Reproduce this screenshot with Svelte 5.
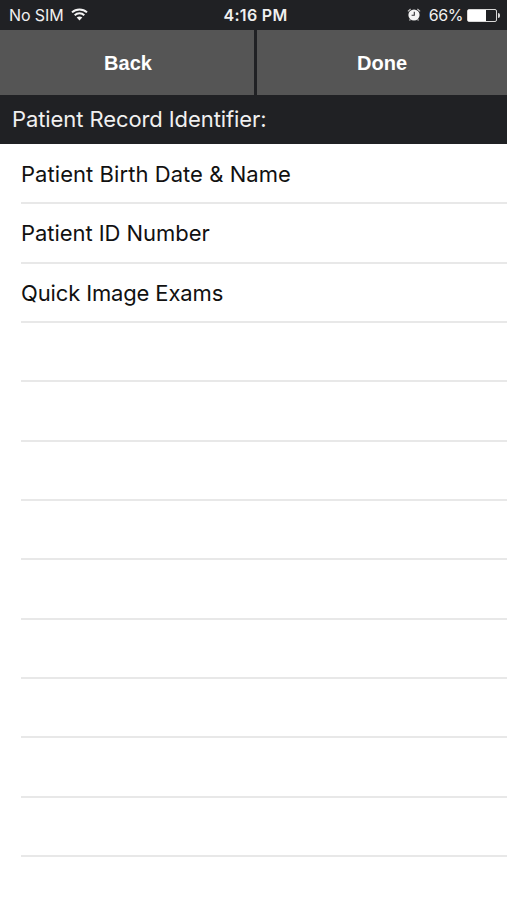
<script>
	const rows = [
		{ text: 'Patient Birth Date & Name', tone: 'wide' },
		{ text: 'Patient ID Number', tone: '' },
		{ text: 'Quick Image Exams', tone: 'tight' },
		...Array(10).fill({ text: '', tone: '' })
	];

	let selected = $state('');
	let battery = $state(66);
</script>

<div class="screen">
	<header class="status">
		<div class="carrier">
			<span class="sim">No SIM</span>
			<svg class="wifi" width="17" height="13" viewBox="0 0 17 13" fill="none" stroke="#f4f4f4" stroke-width="2">
				<path d="M1 4.4C5.2.4 11.8.4 16 4.4" />
				<path d="M3.7 7.2c2.7-2.6 6.9-2.6 9.6 0" />
				<path d="M8.5 12.4 5.7 9.6c1.6-1.5 4-1.5 5.6 0z" fill="#f4f4f4" stroke="none" />
			</svg>
		</div>
		<span class="time">4:16 PM</span>
		<div class="power">
			<svg class="alarm" width="14" height="14" viewBox="0 0 14 14">
				<circle cx="7" cy="7" r="5.6" fill="#f4f4f4" />
				<path d="M.9 3.4 3.6 1M13.1 3.4 10.4 1M3.4 11.4l-.9 1.1M10.6 11.4l.9 1.1" stroke="#c4c4c4" stroke-width="1.2" />
				<path d="M7.3 3.8v3.5H4.6" fill="none" stroke="#303134" stroke-width="1.1" />
			</svg>
			<span class="percent">{battery}%</span>
			<div class="battery">
				<div class="level" style="width: {battery}%"></div>
			</div>
			<div class="cap"></div>
		</div>
	</header>

	<nav class="toolbar">
		<button>Back</button>
		<button>Done</button>
	</nav>

	<h1><span>Patient Record Identifier:</span></h1>

	<ul>
		{#each rows as row}
			<li>
				{#if row.text}
					<button class="row {row.tone}" onclick={() => (selected = row.text)}>{row.text}</button>
				{/if}
			</li>
		{/each}
	</ul>
</div>

<style>
	:global(body) {
		background: #fff;
	}

	.screen {
		height: 900px;
		overflow: hidden;
		background: #fff;
		font-family: Inter, 'Liberation Sans', sans-serif;
	}

	.status {
		display: grid;
		grid-template-columns: 1fr auto 1fr;
		align-items: center;
		height: 30px;
		box-sizing: border-box;
		padding: 0 7px 0 9px;
		background: #202124;
		color: #f0f0f0;
		font-size: 16px;
		line-height: 30px;
	}

	.carrier,
	.power {
		display: flex;
		align-items: center;
	}

	.carrier {
		gap: 7px;
	}

	.wifi {
		margin-top: -2px;
	}

	.alarm {
		margin-top: -1px;
	}

	.sim {
		letter-spacing: -0.1px;
	}

	.time {
		padding-left: 2px;
		font-weight: 600;
		letter-spacing: 0.3px;
	}

	.power {
		justify-content: flex-end;
	}

	.percent {
		margin: 0 4px 0 8px;
		letter-spacing: -0.4px;
	}

	.battery {
		width: 30px;
		height: 13px;
		box-sizing: border-box;
		border: 1px solid #d8d8d8;
		border-radius: 2px;
	}

	.level {
		height: 100%;
		background: #fff;
	}

	.cap {
		width: 2px;
		height: 5px;
		margin-left: 1px;
		border-radius: 0 2px 2px 0;
		background: #d8d8d8;
	}

	button {
		margin: 0;
		padding: 0;
		border: none;
		font: inherit;
		color: inherit;
	}

	.toolbar {
		display: grid;
		grid-template-columns: 254px 1fr;
		column-gap: 3px;
		height: 65px;
		background: #202124;
	}

	.toolbar button {
		padding-top: 2px;
		background: #555;
		color: #fff;
		font: bold 20px/63px 'Liberation Sans', sans-serif;
	}

	.toolbar button:first-child {
		padding-left: 2px;
	}

	h1 {
		height: 49px;
		margin: 0;
		padding-left: 12px;
		background: #202124;
		color: #f0f0f0;
		font-size: 22px;
		font-weight: 400;
		letter-spacing: -0.09px;
		line-height: 49px;
	}

	ul {
		margin: 0;
		padding: 1px 0 0 21px;
		list-style: none;
	}

	li {
		height: 59.35px;
		box-sizing: border-box;
		border-bottom: 2px solid #e8e8e8;
	}

	.row {
		display: block;
		width: 100%;
		background: none;
		color: #111;
		font-size: 22px;
		letter-spacing: -0.05px;
		line-height: 58px;
		text-align: left;
	}

	.wide {
		letter-spacing: 0.06px;
	}

	.tight {
		letter-spacing: -0.14px;
	}
</style>
